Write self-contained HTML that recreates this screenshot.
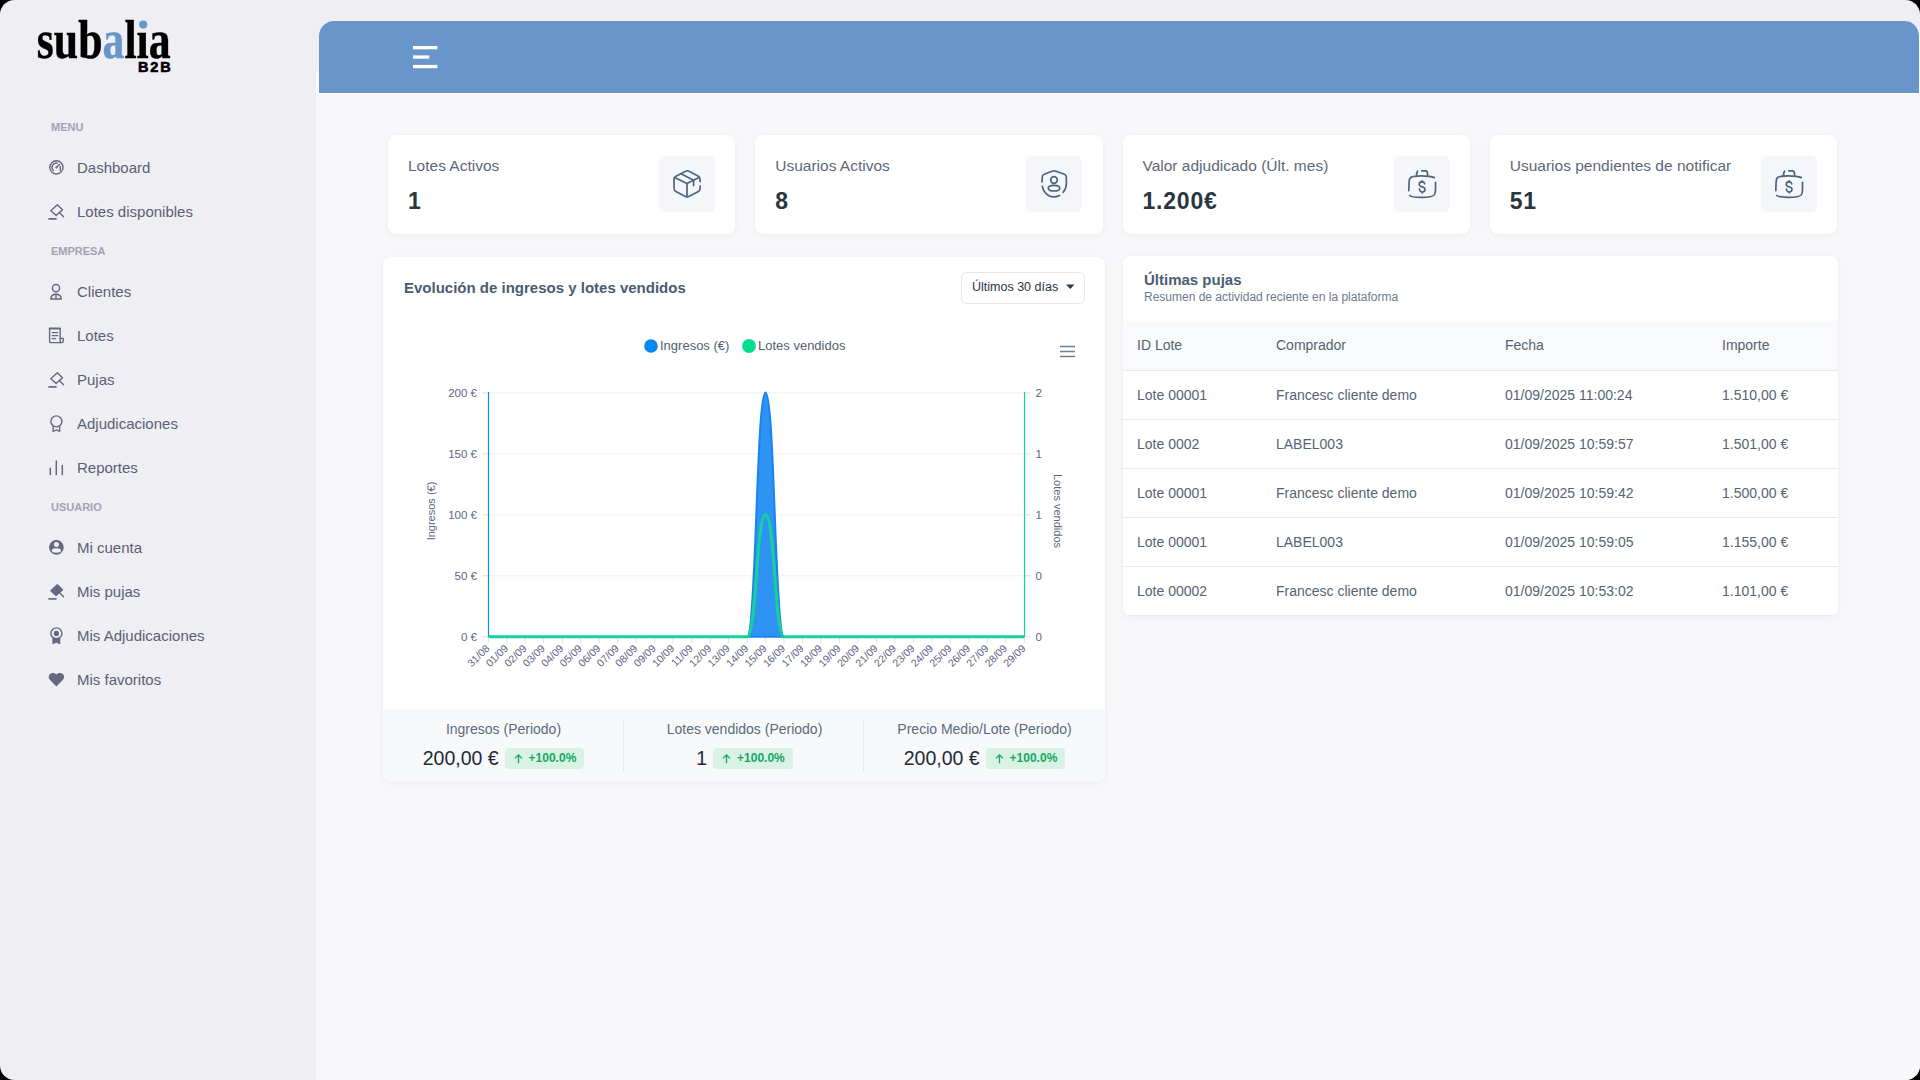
<!DOCTYPE html>
<html><head><meta charset="utf-8"><title>Subalia B2B</title>
<style>
*{box-sizing:border-box;margin:0;padding:0}
html,body{width:1920px;height:1080px;overflow:hidden;background:#000;font-family:"Liberation Sans",sans-serif}
#frame{position:absolute;left:0;top:0;width:1920px;height:1080px;border-radius:14.5px;background:#efeef3;overflow:hidden}
#mainbg{position:absolute;left:316px;top:72px;right:0;bottom:0;background:#f8f8fa}
#header{position:absolute;left:319px;top:21px;width:1601px;height:73px;border:1px solid #fff;border-top:none;border-left:none;border-radius:15px 15px 0 0;background:#6896cb}
.abs{position:absolute}
.sec{position:absolute;left:51px;font-size:11px;font-weight:bold;color:#a3a2b2;letter-spacing:0;line-height:12px}
.item{position:absolute;left:77px;height:20px;font-size:15px;color:#5b6074;line-height:20px;white-space:nowrap}
.card{position:absolute;background:#fff;border-radius:8px;box-shadow:0 1px 6px rgba(30,40,80,0.05)}
.stat{top:135px;width:347.25px;height:99px}
.stat .lbl{position:absolute;left:20px;top:22px;font-size:15.5px;color:#5c6878;line-height:18px;white-space:nowrap}
.stat .val{position:absolute;left:20px;top:52px;font-size:23px;font-weight:bold;color:#2b3542;line-height:28px;letter-spacing:0.8px}
.stat .ic{position:absolute;left:271px;top:21px;width:56px;height:56px;border-radius:6px;background:#f4f6fa}
.ctitle{position:absolute;left:21px;top:22px;font-size:15px;font-weight:bold;color:#4a5c71;line-height:18px;white-space:nowrap}
.dd{position:absolute;left:578px;top:15px;width:124px;height:32px;border:1px solid #e3e7ee;border-radius:6px;font-size:12.5px;color:#2b3440;line-height:28px;padding-left:10px;white-space:nowrap}
.foot{position:absolute;left:0;top:452px;width:722px;height:73px;background:#f8f9fb}
.fcol{position:absolute;top:0;width:241px;height:73px;text-align:center}
.fdiv{position:absolute;top:10px;width:1px;height:53px;background:#e6e9ee}
.flbl{position:absolute;left:0;right:0;top:11px;font-size:14px;color:#5a6b7d;line-height:18px;white-space:nowrap}
.fval{position:absolute;left:0;right:0;top:38px;height:22px;font-size:19.5px;color:#222a35;line-height:22px;white-space:nowrap}
.num{display:inline-block;vertical-align:top}
.badge{position:relative;display:inline-block;vertical-align:top;margin-left:6px;margin-top:1px;height:21px;line-height:21px;padding:0 8px 0 24px;border-radius:4px;background:#d9f2e4;color:#17a765;font-size:12px;font-weight:bold}
.ttitle{position:absolute;left:21px;top:15px;font-size:15px;font-weight:bold;color:#4b5e73;line-height:18px;white-space:nowrap}
.tsub{position:absolute;left:21px;top:34px;font-size:12px;color:#6b7a8c;line-height:15px;white-space:nowrap}
.thead{position:absolute;left:0;top:65px;width:715px;height:50px;background:#f9fafb;border-bottom:1px solid #e6eaf0}
.trow{position:absolute;left:0;width:715px;height:49px;border-bottom:1px solid #e6eaf0}
.cell{position:absolute;top:13.5px;font-size:14px;color:#556474;line-height:20px;white-space:nowrap}

#hdrl{position:absolute;left:318px;top:71px;width:1px;height:23px;background:#fff}

</style></head>
<body><div id="frame">
<div id="mainbg"></div>
<div id="hdrl"></div>
<div id="header">
  <svg class="abs" style="left:94px;top:24.8px" width="26" height="24"><rect x="0" y="0" width="24.4" height="3.3" fill="#fff"/><rect x="0" y="9.4" width="16.3" height="3.3" fill="#fff"/><rect x="0" y="18.9" width="24.4" height="3.3" fill="#fff"/></svg>
</div>

<svg class="abs" style="left:0;top:0" width="200" height="90">
  <g transform="translate(36.8,57.9) scale(0.755,0.935)">
    <text x="0" y="0" font-family="Liberation Serif" font-weight="bold" font-size="58" fill="#000" stroke="#000" stroke-width="0.5">sub<tspan fill="#6896cb" stroke="#6896cb">a</tspan>l<tspan>ı</tspan>a</text>
  </g>
  <circle cx="143.2" cy="24.6" r="4.1" fill="#6896cb"/>
  <text x="138" y="71.6" font-family="Liberation Sans" font-weight="bold" font-size="14.5" letter-spacing="1.9" fill="#000" stroke="#000" stroke-width="0.6">B2B</text>
</svg>

<div class="sec" style="top:121px">MENU</div>
<svg class="abs" style="left:44px;top:155.0px" width="24" height="24" viewBox="0 0 24 24" fill="none" stroke="#666880" stroke-width="1.4" stroke-linecap="round" stroke-linejoin="round"><circle cx="12.4" cy="12.4" r="6.6"/><path d="M9.3 15.5 A4.4 4.4 0 0 1 13.2 8.1"/><path d="M16.3 11.4 L16.3 15.4" /><path d="M12.4 12.5 L15.4 9.5"/><circle cx="12.3" cy="12.5" r="1" fill="#666880" stroke="none"/></svg>
<div class="item" style="top:157.5px">Dashboard</div>
<svg class="abs" style="left:44px;top:199.0px" width="24" height="24" viewBox="0 0 24 24" fill="none" stroke="#666880" stroke-width="1.4" stroke-linecap="round" stroke-linejoin="round"><path d="M13.3 5.7 L18.5 10.8 L12.1 16.5 L6.9 11.7 Z"/><path d="M15.4 13.6 L19.5 17.8"/><path d="M4.4 19.9 L12.6 19.9" stroke-width="1.7" stroke-linecap="butt"/></svg>
<div class="item" style="top:201.5px">Lotes disponibles</div>
<svg class="abs" style="left:44px;top:279.0px" width="24" height="24" viewBox="0 0 24 24" fill="none" stroke="#666880" stroke-width="1.4" stroke-linecap="round" stroke-linejoin="round"><circle cx="12" cy="9.1" r="3.6"/><path d="M6.8 20 C7 16.9 9.2 15.3 12 15.3 C14.8 15.3 17 16.9 17.3 20 Z"/><path d="M12 15.5 L12 19.8"/></svg>
<div class="item" style="top:281.5px">Clientes</div>
<svg class="abs" style="left:44px;top:323.0px" width="24" height="24" viewBox="0 0 24 24" fill="none" stroke="#666880" stroke-width="1.4" stroke-linecap="round" stroke-linejoin="round"><path d="M16.2 19.6 L6.8 19.6 Q5.6 19.6 5.6 18.4 L5.6 5.6 L16.2 5.6 L16.2 19.6"/><path d="M5.6 5.4 L16.2 5.4" stroke-width="1.7"/><path d="M8.2 9.6 L13.7 9.6 M8.2 12.6 L13.7 12.6 M8.2 15.6 L11.6 15.6"/><path d="M16.2 15.4 L19.2 15.4 L19.2 18.2 Q19.2 19.6 17.8 19.6 L16.2 19.6"/></svg>
<div class="item" style="top:325.5px">Lotes</div>
<svg class="abs" style="left:44px;top:367.0px" width="24" height="24" viewBox="0 0 24 24" fill="none" stroke="#666880" stroke-width="1.4" stroke-linecap="round" stroke-linejoin="round"><path d="M13.3 5.7 L18.5 10.8 L12.1 16.5 L6.9 11.7 Z"/><path d="M15.4 13.6 L19.5 17.8"/><path d="M4.4 19.9 L12.6 19.9" stroke-width="1.7" stroke-linecap="butt"/></svg>
<div class="item" style="top:369.5px">Pujas</div>
<svg class="abs" style="left:44px;top:411.0px" width="24" height="24" viewBox="0 0 24 24" fill="none" stroke="#666880" stroke-width="1.4" stroke-linecap="round" stroke-linejoin="round"><circle cx="12.4" cy="10.4" r="5.5"/><path d="M9.1 15.2 L9.1 20.5 L12.4 18.8 L15.6 20.5 L15.6 15.2"/></svg>
<div class="item" style="top:413.5px">Adjudicaciones</div>
<svg class="abs" style="left:44px;top:455.0px" width="24" height="24" viewBox="0 0 24 24" fill="none" stroke="#666880" stroke-width="1.4" stroke-linecap="round" stroke-linejoin="round"><path d="M6.3 13.2 L6.3 19.6 M12.3 6 L12.3 19.6 M18.3 10.4 L18.3 19.6" stroke-width="1.5"/></svg>
<div class="item" style="top:457.5px">Reportes</div>
<svg class="abs" style="left:44px;top:535.0px" width="24" height="24" viewBox="0 0 24 24" fill="none" stroke="#666880" stroke-width="1.4" stroke-linecap="round" stroke-linejoin="round"><path fill-rule="evenodd" fill="#666880" stroke="none" d="M12.4 5.1 A7.3 7.3 0 1 1 12.39 5.1 Z M12.4 7 A2.55 2.55 0 1 0 12.41 7 Z M7.8 15.5 A4.6 2.2 0 1 0 17.0 15.5 A4.6 2.2 0 1 0 7.8 15.5 Z"/></svg>
<div class="item" style="top:537.5px">Mi cuenta</div>
<svg class="abs" style="left:44px;top:579.0px" width="24" height="24" viewBox="0 0 24 24" fill="none" stroke="#666880" stroke-width="1.4" stroke-linecap="round" stroke-linejoin="round"><path d="M13.3 5.7 L18.5 10.8 L12.1 16.5 L6.9 11.7 Z" fill="#666880"/><path d="M15.4 13.6 L19.5 17.8"/><path d="M4.4 19.9 L12.6 19.9" stroke-width="1.7" stroke-linecap="butt"/></svg>
<div class="item" style="top:581.5px">Mis pujas</div>
<svg class="abs" style="left:44px;top:623.0px" width="24" height="24" viewBox="0 0 24 24" fill="none" stroke="#666880" stroke-width="1.4" stroke-linecap="round" stroke-linejoin="round"><circle cx="12.4" cy="10.4" r="5.5"/><circle cx="12.4" cy="10.4" r="2.6" fill="#666880" stroke="none"/><path d="M9.1 15.4 L9.1 20.5 L12.4 18.8 L15.6 20.5 L15.6 15.4 Z" fill="#666880"/></svg>
<div class="item" style="top:625.5px">Mis Adjudicaciones</div>
<svg class="abs" style="left:44px;top:667.0px" width="24" height="24" viewBox="0 0 24 24" fill="none" stroke="#666880" stroke-width="1.4" stroke-linecap="round" stroke-linejoin="round"><path fill="#666880" stroke="none" d="M12.4 19.5 L5.8 12.8 C4.2 11.2 4.3 8.3 6.3 6.8 C8.2 5.4 10.9 5.9 12.4 7.6 C13.9 5.9 16.6 5.4 18.5 6.8 C20.5 8.3 20.6 11.2 19 12.8 Z"/></svg>
<div class="item" style="top:669.5px">Mis favoritos</div>
<div class="sec" style="top:245px">EMPRESA</div>
<div class="sec" style="top:501px">USUARIO</div>
<div class="card stat" style="left:388px"><div class="lbl">Lotes Activos</div><div class="val">1</div><div class="ic"><svg style="position:absolute;left:12px;top:12px;overflow:visible" width="32" height="32" viewBox="0 0 32 32" fill="none" stroke="#4d6580" stroke-width="1.7" stroke-linecap="round" stroke-linejoin="round"><path d="M29.1 13.6 L28.9 10.6 Q28.6 8.8 27 8 L18 3.3 Q16.3 2.5 14.6 3.3 L5 8.2 Q3 9.2 3 11.4 L3.1 20.5 Q3.2 22.5 5 23.6 L14.3 28.5 Q16 29.3 17.7 28.5 L27 23.7 Q28.8 22.8 29 20.8 L29.2 18"/><path d="M3.6 9.6 L16 15.6 L28.4 9.3"/><path d="M16 15.6 L16 28.8"/><path d="M10 5.7 L22.6 12.2 L22.6 17.4"/></svg></div></div>
<div class="card stat" style="left:755.25px"><div class="lbl">Usuarios Activos</div><div class="val">8</div><div class="ic"><svg style="position:absolute;left:12px;top:12px;overflow:visible" width="32" height="32" viewBox="0 0 32 32" fill="none" stroke="#4d6580" stroke-width="1.7" stroke-linecap="round" stroke-linejoin="round"><path d="M4 14 L4.3 8.5 Q4.5 6.8 6.2 6.2 L14 3.3 Q16 2.6 18 3.3 L26.4 6.3 Q28.2 7 28.3 8.8 L28.4 15.5 Q28.3 20.5 25.2 24.3"/><path d="M4.3 18.3 Q5.5 24.5 11 27.8 Q16 30.3 21.5 27.4"/><circle cx="16" cy="12" r="3.3"/><ellipse cx="16" cy="20.2" rx="5.7" ry="2.8"/></svg></div></div>
<div class="card stat" style="left:1122.5px"><div class="lbl">Valor adjudicado (Últ. mes)</div><div class="val">1.200€</div><div class="ic"><svg style="position:absolute;left:12px;top:12px;overflow:visible" width="32" height="32" viewBox="0 0 32 32" fill="none" stroke="#4d6580" stroke-width="1.7" stroke-linecap="round" stroke-linejoin="round"><g transform="translate(-0.8,0)"><path d="M29.1 9.6 Q25 7.8 16 7.8 Q8 7.8 5.5 9.5 Q4 10.8 3.9 14 L3.6 22.6"/><path d="M4.6 27.5 Q6.5 29.3 16 29.3 Q26.5 29.4 29 27 Q30.2 25.6 30.3 22 L30.3 14.4"/><path d="M12.4 3.1 Q11.3 4.5 11.4 7.6"/><path d="M16.6 2.8 L20.2 2.8 Q22.3 3 22.3 5.5 L22.3 7.6"/><path d="M19.5 15.8 Q18.8 13.8 17 13.7 Q14 13.7 14 16.5 Q14.2 18.5 17 18.8 Q19.8 19.2 19.8 21.5 Q19.6 24.2 17 24 Q14.6 24 14.2 21"/><path d="M17 12.8 L17 13.8 M17 24 L17 24.8"/></g></svg></div></div>
<div class="card stat" style="left:1489.75px"><div class="lbl">Usuarios pendientes de notificar</div><div class="val">51</div><div class="ic"><svg style="position:absolute;left:12px;top:12px;overflow:visible" width="32" height="32" viewBox="0 0 32 32" fill="none" stroke="#4d6580" stroke-width="1.7" stroke-linecap="round" stroke-linejoin="round"><g transform="translate(-0.8,0)"><path d="M29.1 9.6 Q25 7.8 16 7.8 Q8 7.8 5.5 9.5 Q4 10.8 3.9 14 L3.6 22.6"/><path d="M4.6 27.5 Q6.5 29.3 16 29.3 Q26.5 29.4 29 27 Q30.2 25.6 30.3 22 L30.3 14.4"/><path d="M12.4 3.1 Q11.3 4.5 11.4 7.6"/><path d="M16.6 2.8 L20.2 2.8 Q22.3 3 22.3 5.5 L22.3 7.6"/><path d="M19.5 15.8 Q18.8 13.8 17 13.7 Q14 13.7 14 16.5 Q14.2 18.5 17 18.8 Q19.8 19.2 19.8 21.5 Q19.6 24.2 17 24 Q14.6 24 14.2 21"/><path d="M17 12.8 L17 13.8 M17 24 L17 24.8"/></g></svg></div></div>

<div class="card" style="left:383px;top:257px;width:722px;height:525px;overflow:hidden">
  <div class="ctitle">Evolución de ingresos y lotes vendidos</div>
  <div class="dd">Últimos 30 días<svg style="position:absolute;left:104px;top:11px" width="9" height="6"><path d="M0 0.5 H8.5 L4.25 5 Z" fill="#2b3440"/></svg></div>
  <div class="foot">
    <div class="fcol" style="left:0"><div class="flbl">Ingresos (Periodo)</div><div class="fval"><span class="num">200,00 €</span><span class="badge"><svg width="9" height="11" style="position:absolute;left:9px;top:6px"><path d="M4.5 9.3 V1 M1 4.4 L4.5 0.9 L8 4.4" fill="none" stroke="#17a765" stroke-width="1.3"/></svg>+100.0%</span></div></div>
    <div class="fdiv" style="left:240px"></div>
    <div class="fcol" style="left:241px"><div class="flbl">Lotes vendidos (Periodo)</div><div class="fval"><span class="num">1</span><span class="badge"><svg width="9" height="11" style="position:absolute;left:9px;top:6px"><path d="M4.5 9.3 V1 M1 4.4 L4.5 0.9 L8 4.4" fill="none" stroke="#17a765" stroke-width="1.3"/></svg>+100.0%</span></div></div>
    <div class="fdiv" style="left:480px"></div>
    <div class="fcol" style="left:481px"><div class="flbl">Precio Medio/Lote (Periodo)</div><div class="fval"><span class="num">200,00 €</span><span class="badge"><svg width="9" height="11" style="position:absolute;left:9px;top:6px"><path d="M4.5 9.3 V1 M1 4.4 L4.5 0.9 L8 4.4" fill="none" stroke="#17a765" stroke-width="1.3"/></svg>+100.0%</span></div></div>
  </div>
</div>

<svg class="abs" style="left:0;top:0" width="1920" height="1080" viewBox="0 0 1920 1080" font-family="Liberation Sans, sans-serif">
<circle cx="651" cy="346" r="6.8" fill="#0587f2"/>
<text x="660" y="350" font-size="13" fill="#4f5f72">Ingresos (€)</text>
<circle cx="749" cy="346" r="6.9" fill="#02dd8e"/>
<text x="758" y="350" font-size="13" fill="#4f5f72">Lotes vendidos</text>
<path d="M1060 346.5 H1075 M1060 351.5 H1075 M1060 356.5 H1075" stroke="#6e8192" stroke-width="1.6"/>
<path d="M489 392.9 H1024" stroke="#f0f1f5" stroke-width="1"/>
<path d="M482 392.9 H488" stroke="#e1e1e1" stroke-width="1"/>
<path d="M1025 392.9 H1031" stroke="#e1e1e1" stroke-width="1"/>
<path d="M489 453.9 H1024" stroke="#f0f1f5" stroke-width="1"/>
<path d="M482 453.9 H488" stroke="#e1e1e1" stroke-width="1"/>
<path d="M1025 453.9 H1031" stroke="#e1e1e1" stroke-width="1"/>
<path d="M489 514.8 H1024" stroke="#f0f1f5" stroke-width="1"/>
<path d="M482 514.8 H488" stroke="#e1e1e1" stroke-width="1"/>
<path d="M1025 514.8 H1031" stroke="#e1e1e1" stroke-width="1"/>
<path d="M489 575.8 H1024" stroke="#f0f1f5" stroke-width="1"/>
<path d="M482 575.8 H488" stroke="#e1e1e1" stroke-width="1"/>
<path d="M1025 575.8 H1031" stroke="#e1e1e1" stroke-width="1"/>
<path d="M489 636.8 H1024" stroke="#f0f1f5" stroke-width="1"/>
<path d="M482 636.8 H488" stroke="#e1e1e1" stroke-width="1"/>
<path d="M1025 636.8 H1031" stroke="#e1e1e1" stroke-width="1"/>
<text x="477" y="396.9" font-size="11.5" fill="#5e6584" text-anchor="end">200 €</text>
<text x="1035.5" y="396.9" font-size="11.5" fill="#5e6584">2</text>
<text x="477" y="457.9" font-size="11.5" fill="#5e6584" text-anchor="end">150 €</text>
<text x="1035.5" y="457.9" font-size="11.5" fill="#5e6584">1</text>
<text x="477" y="518.8" font-size="11.5" fill="#5e6584" text-anchor="end">100 €</text>
<text x="1035.5" y="518.8" font-size="11.5" fill="#5e6584">1</text>
<text x="477" y="579.8" font-size="11.5" fill="#5e6584" text-anchor="end">50 €</text>
<text x="1035.5" y="579.8" font-size="11.5" fill="#5e6584">0</text>
<text x="477" y="640.8" font-size="11.5" fill="#5e6584" text-anchor="end">0 €</text>
<text x="1035.5" y="640.8" font-size="11.5" fill="#5e6584">0</text>
<text transform="translate(435,511) rotate(-90)" font-size="11" fill="#5e6584" text-anchor="middle">Ingresos (€)</text>
<text transform="translate(1053.5,511) rotate(90)" font-size="11" fill="#5e6584" text-anchor="middle">Lotes vendidos</text>
<path d="M488.3 637 V643" stroke="#e1e1e1" stroke-width="1"/>
<text transform="translate(490.3,649) rotate(-45)" font-size="10.5" fill="#5e6584" text-anchor="end">31/08</text>
<path d="M506.8 637 V643" stroke="#e1e1e1" stroke-width="1"/>
<text transform="translate(508.8,649) rotate(-45)" font-size="10.5" fill="#5e6584" text-anchor="end">01/09</text>
<path d="M525.3 637 V643" stroke="#e1e1e1" stroke-width="1"/>
<text transform="translate(527.3,649) rotate(-45)" font-size="10.5" fill="#5e6584" text-anchor="end">02/09</text>
<path d="M543.7 637 V643" stroke="#e1e1e1" stroke-width="1"/>
<text transform="translate(545.7,649) rotate(-45)" font-size="10.5" fill="#5e6584" text-anchor="end">03/09</text>
<path d="M562.2 637 V643" stroke="#e1e1e1" stroke-width="1"/>
<text transform="translate(564.2,649) rotate(-45)" font-size="10.5" fill="#5e6584" text-anchor="end">04/09</text>
<path d="M580.7 637 V643" stroke="#e1e1e1" stroke-width="1"/>
<text transform="translate(582.7,649) rotate(-45)" font-size="10.5" fill="#5e6584" text-anchor="end">05/09</text>
<path d="M599.2 637 V643" stroke="#e1e1e1" stroke-width="1"/>
<text transform="translate(601.2,649) rotate(-45)" font-size="10.5" fill="#5e6584" text-anchor="end">06/09</text>
<path d="M617.7 637 V643" stroke="#e1e1e1" stroke-width="1"/>
<text transform="translate(619.7,649) rotate(-45)" font-size="10.5" fill="#5e6584" text-anchor="end">07/09</text>
<path d="M636.2 637 V643" stroke="#e1e1e1" stroke-width="1"/>
<text transform="translate(638.2,649) rotate(-45)" font-size="10.5" fill="#5e6584" text-anchor="end">08/09</text>
<path d="M654.6 637 V643" stroke="#e1e1e1" stroke-width="1"/>
<text transform="translate(656.6,649) rotate(-45)" font-size="10.5" fill="#5e6584" text-anchor="end">09/09</text>
<path d="M673.1 637 V643" stroke="#e1e1e1" stroke-width="1"/>
<text transform="translate(675.1,649) rotate(-45)" font-size="10.5" fill="#5e6584" text-anchor="end">10/09</text>
<path d="M691.6 637 V643" stroke="#e1e1e1" stroke-width="1"/>
<text transform="translate(693.6,649) rotate(-45)" font-size="10.5" fill="#5e6584" text-anchor="end">11/09</text>
<path d="M710.1 637 V643" stroke="#e1e1e1" stroke-width="1"/>
<text transform="translate(712.1,649) rotate(-45)" font-size="10.5" fill="#5e6584" text-anchor="end">12/09</text>
<path d="M728.6 637 V643" stroke="#e1e1e1" stroke-width="1"/>
<text transform="translate(730.6,649) rotate(-45)" font-size="10.5" fill="#5e6584" text-anchor="end">13/09</text>
<path d="M747.1 637 V643" stroke="#e1e1e1" stroke-width="1"/>
<text transform="translate(749.1,649) rotate(-45)" font-size="10.5" fill="#5e6584" text-anchor="end">14/09</text>
<path d="M765.5 637 V643" stroke="#e1e1e1" stroke-width="1"/>
<text transform="translate(767.5,649) rotate(-45)" font-size="10.5" fill="#5e6584" text-anchor="end">15/09</text>
<path d="M784.0 637 V643" stroke="#e1e1e1" stroke-width="1"/>
<text transform="translate(786.0,649) rotate(-45)" font-size="10.5" fill="#5e6584" text-anchor="end">16/09</text>
<path d="M802.5 637 V643" stroke="#e1e1e1" stroke-width="1"/>
<text transform="translate(804.5,649) rotate(-45)" font-size="10.5" fill="#5e6584" text-anchor="end">17/09</text>
<path d="M821.0 637 V643" stroke="#e1e1e1" stroke-width="1"/>
<text transform="translate(823.0,649) rotate(-45)" font-size="10.5" fill="#5e6584" text-anchor="end">18/09</text>
<path d="M839.5 637 V643" stroke="#e1e1e1" stroke-width="1"/>
<text transform="translate(841.5,649) rotate(-45)" font-size="10.5" fill="#5e6584" text-anchor="end">19/09</text>
<path d="M858.0 637 V643" stroke="#e1e1e1" stroke-width="1"/>
<text transform="translate(860.0,649) rotate(-45)" font-size="10.5" fill="#5e6584" text-anchor="end">20/09</text>
<path d="M876.4 637 V643" stroke="#e1e1e1" stroke-width="1"/>
<text transform="translate(878.4,649) rotate(-45)" font-size="10.5" fill="#5e6584" text-anchor="end">21/09</text>
<path d="M894.9 637 V643" stroke="#e1e1e1" stroke-width="1"/>
<text transform="translate(896.9,649) rotate(-45)" font-size="10.5" fill="#5e6584" text-anchor="end">22/09</text>
<path d="M913.4 637 V643" stroke="#e1e1e1" stroke-width="1"/>
<text transform="translate(915.4,649) rotate(-45)" font-size="10.5" fill="#5e6584" text-anchor="end">23/09</text>
<path d="M931.9 637 V643" stroke="#e1e1e1" stroke-width="1"/>
<text transform="translate(933.9,649) rotate(-45)" font-size="10.5" fill="#5e6584" text-anchor="end">24/09</text>
<path d="M950.4 637 V643" stroke="#e1e1e1" stroke-width="1"/>
<text transform="translate(952.4,649) rotate(-45)" font-size="10.5" fill="#5e6584" text-anchor="end">25/09</text>
<path d="M968.9 637 V643" stroke="#e1e1e1" stroke-width="1"/>
<text transform="translate(970.9,649) rotate(-45)" font-size="10.5" fill="#5e6584" text-anchor="end">26/09</text>
<path d="M987.3 637 V643" stroke="#e1e1e1" stroke-width="1"/>
<text transform="translate(989.3,649) rotate(-45)" font-size="10.5" fill="#5e6584" text-anchor="end">27/09</text>
<path d="M1005.8 637 V643" stroke="#e1e1e1" stroke-width="1"/>
<text transform="translate(1007.8,649) rotate(-45)" font-size="10.5" fill="#5e6584" text-anchor="end">28/09</text>
<path d="M1024.3 637 V643" stroke="#e1e1e1" stroke-width="1"/>
<text transform="translate(1026.3,649) rotate(-45)" font-size="10.5" fill="#5e6584" text-anchor="end">29/09</text>
<path d="M488.5 392 V637" stroke="#008ffb" stroke-width="1.2"/>
<path d="M1024.5 392 V637" stroke="#00e396" stroke-width="1.2"/>
<path d="M747.1 636.8 C756.3 636.8 756.3 392.6 765.5 392.6 C774.8 392.6 774.8 636.8 784.0 636.8 Z" fill="#2f93f4" stroke="#1a84ee" stroke-width="2"/>
<path d="M488.5 636.8 L747.1 636.8 C756.3 636.8 756.3 514.8 765.5 514.8 C774.8 514.8 774.8 636.8 784.0 636.8 L1024.3 636.8" fill="none" stroke="#17d19b" stroke-width="3" stroke-linejoin="round"/>
</svg>
<div class="card" style="left:1123px;top:256px;width:715px;height:359.5px;overflow:hidden">
<div class="ttitle">Últimas pujas</div><div class="tsub">Resumen de actividad reciente en la plataforma</div>
<div class="thead">
<div class="cell" style="left:14px">ID Lote</div>
<div class="cell" style="left:153px">Comprador</div>
<div class="cell" style="left:382px">Fecha</div>
<div class="cell" style="left:599px">Importe</div>
</div>
<div class="trow" style="top:115px">
<div class="cell" style="left:14px">Lote 00001</div>
<div class="cell" style="left:153px">Francesc cliente demo</div>
<div class="cell" style="left:382px">01/09/2025 11:00:24</div>
<div class="cell" style="left:599px">1.510,00 €</div>
</div>
<div class="trow" style="top:164px">
<div class="cell" style="left:14px">Lote 0002</div>
<div class="cell" style="left:153px">LABEL003</div>
<div class="cell" style="left:382px">01/09/2025 10:59:57</div>
<div class="cell" style="left:599px">1.501,00 €</div>
</div>
<div class="trow" style="top:213px">
<div class="cell" style="left:14px">Lote 00001</div>
<div class="cell" style="left:153px">Francesc cliente demo</div>
<div class="cell" style="left:382px">01/09/2025 10:59:42</div>
<div class="cell" style="left:599px">1.500,00 €</div>
</div>
<div class="trow" style="top:262px">
<div class="cell" style="left:14px">Lote 00001</div>
<div class="cell" style="left:153px">LABEL003</div>
<div class="cell" style="left:382px">01/09/2025 10:59:05</div>
<div class="cell" style="left:599px">1.155,00 €</div>
</div>
<div class="trow" style="top:311px">
<div class="cell" style="left:14px">Lote 00002</div>
<div class="cell" style="left:153px">Francesc cliente demo</div>
<div class="cell" style="left:382px">01/09/2025 10:53:02</div>
<div class="cell" style="left:599px">1.101,00 €</div>
</div>
</div>
</div></body></html>
